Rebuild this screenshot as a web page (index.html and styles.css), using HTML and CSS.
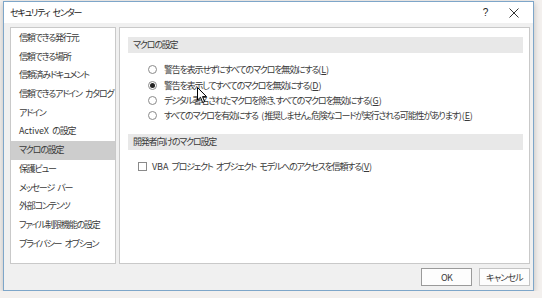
FILE: index.html
```html
<!DOCTYPE html>
<html lang="ja">
<head>
  <meta charset="UTF-8" />
  <title>セキュリティ センター</title>
  <link rel="stylesheet" href="styles.css">
</head>
<body>
  <div class="dialog">
    <div class="titlebar">
      <span class="title">セキュリティ センター</span>
      <span class="help">?</span>
      <svg class="close" width="10" height="10" viewBox="0 0 10 10">
        <path d="M0.5 0.5 L9.5 9.5 M9.5 0.5 L0.5 9.5" stroke="#333" stroke-width="1" fill="none"/>
      </svg>
    </div>

    <div class="content">
      <ul class="nav">
        <li>信頼できる発行元</li>
        <li>信頼できる場所</li>
        <li>信頼済みドキュメント</li>
        <li>信頼できるアドイン カタログ</li>
        <li>アドイン</li>
        <li><span class="latin">ActiveX</span> の設定</li>
        <li class="active">マクロの設定</li>
        <li>保護ビュー</li>
        <li>メッセージ バー</li>
        <li>外部コンテンツ</li>
        <li>ファイル制限機能の設定</li>
        <li>プライバシー オプション</li>
      </ul>

      <div class="pane">
        <div class="section-head">マクロの設定</div>
        <div class="options">
          <label class="radio"><span class="dot"></span>警告を表示せずにすべてのマクロを無効にする<span class="latin">(<u>L</u>)</span></label>
          <label class="radio checked"><span class="dot"></span>警告を表示してすべてのマクロを無効にする<span class="latin">(<u>D</u>)</span></label>
          <label class="radio"><span class="dot"></span>デジタル署名されたマクロを除き、すべてのマクロを無効にする<span class="latin">(<u>G</u>)</span></label>
          <label class="radio"><span class="dot"></span>すべてのマクロを有効にする <span class="latin">(</span>推奨しません。危険なコードが実行される可能性があります<span class="latin">)(<u>E</u>)</span></label>
        </div>

        <div class="section-head">開発者向けのマクロ設定</div>
        <div class="options">
          <label class="check"><span class="box"></span><span class="latin">VBA</span> プロジェクト オブジェクト モデルへのアクセスを信頼する<span class="latin">(<u>V</u>)</span></label>
        </div>

        <svg class="cursor" width="11" height="17" viewBox="0 0 11 17">
          <path d="M0.5 0.5 L0.5 13 L3.5 10.3 L5.6 15.5 L7.6 14.6 L5.5 9.6 L9.5 9.6 Z" fill="#fff" stroke="#000" stroke-width="1" stroke-linejoin="round"/>
        </svg>
      </div>
    </div>

    <div class="footer">
      <button class="btn default">OK</button>
      <button class="btn">キャンセル</button>
    </div>
  </div>
</body>
</html>
```

FILE: styles.css
```css
* {
  margin: 0;
  padding: 0;
  box-sizing: border-box;
}
body {
  background-color: #f3f0ee;
  font-family: 'Noto Sans CJK JP', 'Noto Sans', sans-serif;
  font-size: 9px;
  letter-spacing: -1.2px;
  word-spacing: 2.5px;
  font-feature-settings: "palt";
  color: #3a3a3a;
}
.latin {
  letter-spacing: -0.1px;
  word-spacing: 0;
}
.dialog {
  margin: 1px 0 0 3px;
  width: 531px;
  height: 290px;
  border: 1px solid #7ea6c9;
  background-color: #f0f0f0;
  display: flex;
  flex-direction: column;
  box-shadow: 0 2px 6px rgba(0, 0, 0, 0.22);
}
.titlebar {
  height: 21px;
  flex: none;
  background-color: #fff;
  display: flex;
  align-items: center;
  padding: 0 14px 0 6px;
}
.title {
  flex: 1;
  color: #222;
}
.help {
  font-family: 'Liberation Sans', sans-serif;
  font-size: 10px;
  color: #222;
  margin-right: 22px;
}
.close {
  display: block;
}
.content {
  display: flex;
  gap: 3px;
  padding: 4px 3px 0 6px;
  height: 241px;
}
.nav {
  list-style: none;
  width: 106px;
  flex: none;
  background-color: #fff;
  border: 1px solid #c9c9c9;
  padding-top: 1px;
}
.nav li {
  height: 18.7px;
  line-height: 18.7px;
  padding-left: 8px;
  white-space: nowrap;
}
.nav li.active {
  background-color: #cdcdcd;
}
.pane {
  position: relative;
  flex: 1;
  background-color: #fff;
  border: 1px solid #c9c9c9;
  padding: 9px 6px 0 8px;
}
.section-head {
  height: 16px;
  line-height: 16px;
  background-color: #e8e8e8;
  padding-left: 5px;
}
.options {
  padding: 9px 0 10px 10px;
}
.radio, .check {
  display: flex;
  align-items: center;
  height: 15.4px;
  white-space: pre;
}
.radio {
  padding-left: 10px;
}
.dot {
  width: 9px;
  height: 9px;
  border: 1px solid #8a8a8a;
  border-radius: 50%;
  margin-right: 7px;
  display: flex;
  align-items: center;
  justify-content: center;
}
.radio.checked .dot::after {
  content: "";
  width: 5px;
  height: 5px;
  border-radius: 50%;
  background-color: #222;
}
.box {
  width: 9px;
  height: 9px;
  border: 1px solid #8a8a8a;
  margin-right: 5px;
}
u {
  text-decoration: underline;
}
.cursor {
  position: absolute;
  left: 77px;
  top: 59px;
}
.footer {
  display: flex;
  justify-content: flex-end;
  gap: 7px;
  padding: 4px 3px 0 0;
}
.btn {
  width: 51px;
  height: 18px;
  background-color: #fdfdfd;
  border: 1px solid #c4c4c4;
  font-family: inherit;
  font-size: 9px;
  letter-spacing: -0.8px;
  font-feature-settings: "palt";
  color: #3a3a3a;
}
.btn.default {
  border-color: #9a9a9a;
}
```
